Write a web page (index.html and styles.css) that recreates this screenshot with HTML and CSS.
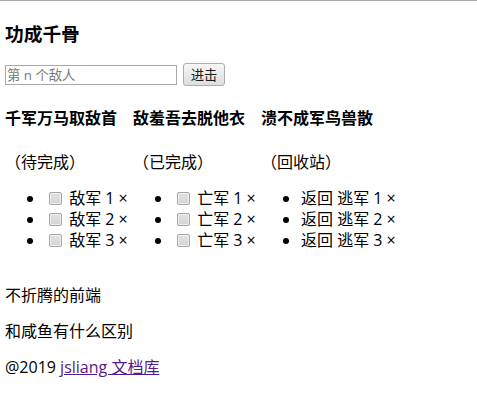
FILE: index.html
```html
<!DOCTYPE html>
<html lang="zh">
<head>
<meta charset="utf-8">
<title>功成千骨</title>
<link rel="stylesheet" href="styles.css">
</head>
<body>
<div class="app">
  <h3 class="title">功成千骨</h3>
  <div class="form">
    <input class="enemy-input" type="text" placeholder="第 n 个敌人">
    <button class="attack-btn" type="button">进击</button>
  </div>
  <div class="board">
    <section class="col">
      <div class="col-title">千军万马取敌首</div>
      <div class="state">（待完成）</div>
      <ul class="items">
        <li><input class="check" type="checkbox"> 敌军 1 ×</li>
        <li><input class="check" type="checkbox"> 敌军 2 ×</li>
        <li><input class="check" type="checkbox"> 敌军 3 ×</li>
      </ul>
    </section>
    <section class="col">
      <div class="col-title">敌羞吾去脱他衣</div>
      <div class="state">（已完成）</div>
      <ul class="items">
        <li><input class="check" type="checkbox"> 亡军 1 ×</li>
        <li><input class="check" type="checkbox"> 亡军 2 ×</li>
        <li><input class="check" type="checkbox"> 亡军 3 ×</li>
      </ul>
    </section>
    <section class="col">
      <div class="col-title">溃不成军鸟兽散</div>
      <div class="state">（回收站）</div>
      <ul class="items">
        <li>返回 逃军 1 ×</li>
        <li>返回 逃军 2 ×</li>
        <li>返回 逃军 3 ×</li>
      </ul>
    </section>
  </div>
  <footer class="footer">
    <p class="line">不折腾的前端</p>
    <p class="line">和咸鱼有什么区别</p>
    <p class="line">@2019 <a class="doc-link" href="#">jsliang 文档库</a></p>
  </footer>
</div>
</body>
</html>
```
FILE: styles.css
```css
html, body {
  margin: 0;
  padding: 0;
  background: #fff;
}
body {
  border-top: 1px solid #ababab;
  font-family: "Open Sans", "Noto Sans CJK SC", sans-serif;
  font-size: 16px;
  line-height: 21px;
  color: #000;
}
.app {
  padding: 0 5px;
}
.title {
  margin: 21px 0 0;
  font-size: 18.72px;
  line-height: 24px;
  font-weight: bold;
}
.form {
  margin-top: 17px;
  height: 23px;
  display: flex;
  align-items: center;
}
.enemy-input {
  box-sizing: border-box;
  width: 172px;
  height: 20px;
  margin: 0;
  padding: 0 1px;
  border: 1px solid #a9a9a9;
  font-family: "Open Sans", "Noto Sans CJK SC", sans-serif;
  font-size: 13.33px;
  outline: none;
}
.enemy-input::placeholder {
  color: #7a7a7a;
}
.attack-btn {
  box-sizing: border-box;
  width: 42px;
  height: 23px;
  margin: 0 0 0 6px;
  padding: 0;
  border: 1px solid #adadad;
  border-radius: 3px;
  background: linear-gradient(#f6f6f6, #dedede);
  font-family: "Open Sans", "Noto Sans CJK SC", sans-serif;
  font-size: 13.33px;
  color: #1a1a1a;
}
.board {
  margin-top: 22px;
  display: grid;
  grid-template-columns: 128px 128px 128px;
  white-space: nowrap;
}
.col-title {
  font-weight: bold;
}
.state {
  margin-top: 23px;
}
.items {
  margin: 15px 0 0;
  padding-left: 40px;
  list-style: disc;
}
.check {
  -webkit-appearance: none;
  appearance: none;
  box-sizing: border-box;
  width: 13px;
  height: 13px;
  margin: 0 3px 0 4px;
  vertical-align: -1px;
  border: 1px solid #a6a6a6;
  border-radius: 2px;
  background: linear-gradient(#e2e2e2, #d4d4d4);
  box-shadow: inset 0 0 0 1px #eeeeee;
}
.footer {
  margin-top: 34px;
}
.line {
  margin: 0 0 15px;
}
.doc-link {
  color: #551a8b;
}
```
